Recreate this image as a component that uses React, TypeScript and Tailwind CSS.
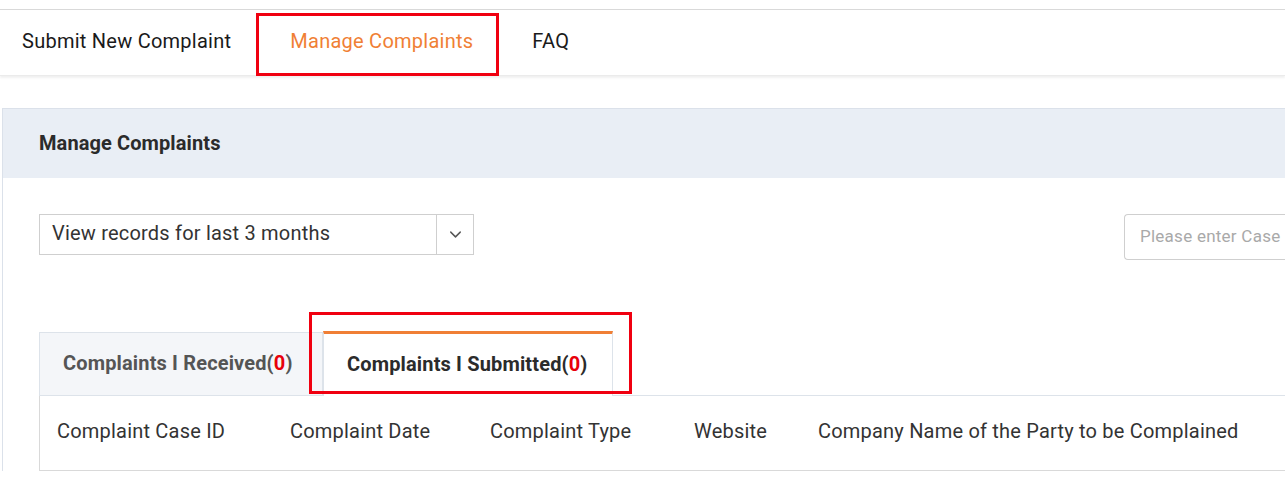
import { ChevronDown } from "lucide-react"

const columns = [
  { label: "Complaint Case ID", w: "w-[233px]" },
  { label: "Complaint Date", w: "w-[200px]" },
  { label: "Complaint Type", w: "w-[204px]" },
  { label: "Website", w: "w-[124px]" },
  { label: "Company Name of the Party to be Complained", w: "" },
]

export default function App() {
  return (
    <div className="w-[1285px] h-[493px] overflow-hidden bg-white font-['Roboto',sans-serif] text-[#222] tracking-[0.2px]">
      <div className="h-[9px]" />

      {/* Top navigation */}
      <nav className="relative h-[67px] border-t border-[#d9d9d9] shadow-[0_2px_2px_rgba(0,0,0,0.06)] border-b border-b-[#ebebeb] flex items-center pl-[22px] text-[20px] tracking-[0.25px] pb-[4px]">
        <span className="text-[#1a1a1a]">Submit New Complaint</span>
        <span className="ml-[59px] text-[#f07f35]">Manage Complaints</span>
        <span className="ml-[59px] text-[#1a1a1a]">FAQ</span>
        {/* annotation box */}
        <div className="absolute left-[256px] top-[3px] w-[243px] h-[63px] border-[3px] border-[#f00010]" />
      </nav>

      {/* Card */}
      <div className="mt-[32px] ml-[2px] border-l border-t border-[#dbe1ea]">
        <div className="h-[69px] bg-[#e9eef5] flex items-center pl-[36px] pb-[2px] text-[20px] tracking-[0.1px] font-bold text-[#2b2b2b]">
          Manage Complaints
        </div>

        <div className="pl-[36px] pt-[36px]">
          <div className="flex items-start justify-between">
            <div className="w-[435px] h-[41px] border border-[#cfcfcf] flex items-center">
              <span className="flex-1 pl-[12px] pb-[3px] text-[20px] text-[#333]">View records for last 3 months</span>
              <span className="w-[37px] h-full border-l border-[#cfcfcf] flex items-center justify-center">
                <ChevronDown className="w-[19px] h-[19px] text-[#555]" strokeWidth={1.8} />
              </span>
            </div>
            <div className="w-[161px] h-[46px] border border-r-0 border-[#cfcfcf] rounded-l-[4px] flex items-center pl-[15px] text-[17px] tracking-[0.25px] text-[#a9a9a9] whitespace-nowrap">
              Please enter Case
            </div>
          </div>

          {/* Tabs */}
          <div className="relative mt-[72px] flex items-stretch h-[64px] border-b border-[#dde3ea]">
            <div className="w-[284px] bg-[#f4f6f9] border border-b-0 border-[#dde3ea] flex items-center pl-[23px] pb-[2px] text-[20px] tracking-[0.15px] font-bold text-[#555]">
              <span>Complaints I Received(<span className="text-[#e8000b]">0</span>)</span>
            </div>
            <div className="w-[290px] bg-white border-x border-[#dde3ea] border-t-[3px] border-t-[#f07f35] -mt-[1px] -mb-[1px] flex items-center pl-[23px] pb-[2px] text-[20px] tracking-[0.15px] font-bold text-[#2b2b2b]">
              <span>Complaints I Submitted(<span className="text-[#e8000b]">0</span>)</span>
            </div>
            <div className="flex-1 bg-white" />
            {/* annotation box */}
            <div className="absolute left-[270px] -top-[20px] w-[323px] h-[82px] border-[3px] border-[#f00010]" />
          </div>

          {/* Table header */}
          <div className="h-[75px] border-l border-b border-[#d9d9d9] flex items-center pl-[17px] pb-[4px] text-[20px] text-[#333]">
            {columns.map((c) => (
              <div key={c.label} className={`${c.w} shrink-0`}>
                {c.label}
              </div>
            ))}
          </div>
        </div>
      </div>
    </div>
  )
}
